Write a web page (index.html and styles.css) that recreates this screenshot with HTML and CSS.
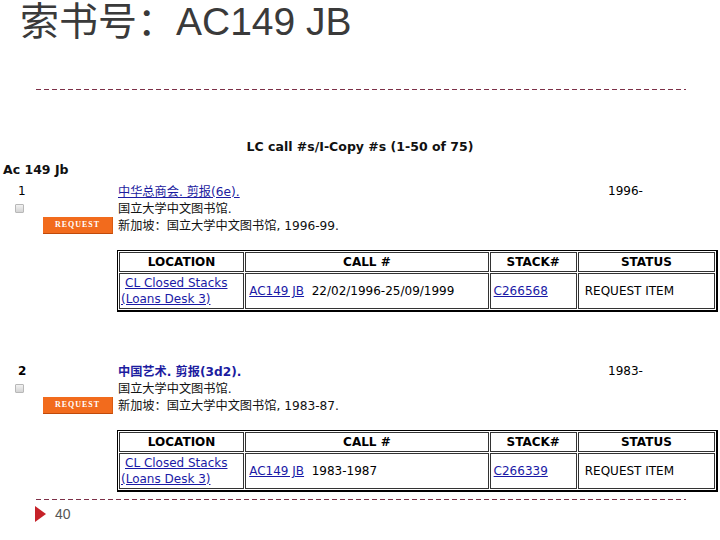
FILE: index.html
```html
<!DOCTYPE html>
<html>
<head>
<meta charset="utf-8">
<link rel="stylesheet" href="styles.css">
</head>
<body>
<div class="slide">
  <h1 class="title">索书号：AC149 JB</h1>
  <div class="rule rule-top"></div>

  <div class="caption">LC call #s/I-Copy #s (1-50 of 75)</div>
  <div class="heading">Ac 149 Jb</div>

  <div class="record">
    <div class="num">1</div>
    <div class="check"><span class="box"></span></div>
    <div class="btn-cell"><span class="req-btn">REQUEST</span></div>
    <div class="line l1"><a class="title-link u" href="#">中华总商会. 剪报(6e).</a></div>
    <div class="line l2">国立大学中文图书馆.</div>
    <div class="line l3">新加坡：国立大学中文图书馆, 1996-99.</div>
    <div class="year">1996-</div>
  </div>

  <table class="holdings">
    <tr class="head">
      <th class="c-loc">LOCATION</th>
      <th class="c-call">CALL #</th>
      <th class="c-stack">STACK#</th>
      <th class="c-status">STATUS</th>
    </tr>
    <tr class="data">
      <td class="loc"><a href="#"><span class="indent">CL Closed Stacks</span><br>(Loans Desk 3)</a></td>
      <td><a href="#">AC149 JB</a>&nbsp;&nbsp;22/02/1996-25/09/1999</td>
      <td><a href="#">C266568</a></td>
      <td class="status">REQUEST ITEM</td>
    </tr>
  </table>

  <div class="record record2">
    <div class="num bold">2</div>
    <div class="check"><span class="box"></span></div>
    <div class="btn-cell"><span class="req-btn">REQUEST</span></div>
    <div class="line l1"><a class="title-link b" href="#">中国艺术. 剪报(3d2).</a></div>
    <div class="line l2">国立大学中文图书馆.</div>
    <div class="line l3">新加坡：国立大学中文图书馆, 1983-87.</div>
    <div class="year">1983-</div>
  </div>

  <table class="holdings holdings2">
    <tr class="head">
      <th class="c-loc">LOCATION</th>
      <th class="c-call">CALL #</th>
      <th class="c-stack">STACK#</th>
      <th class="c-status">STATUS</th>
    </tr>
    <tr class="data">
      <td class="loc"><a href="#"><span class="indent">CL Closed Stacks</span><br>(Loans Desk 3)</a></td>
      <td><a href="#">AC149 JB</a>&nbsp;&nbsp;1983-1987</td>
      <td><a href="#">C266339</a></td>
      <td class="status">REQUEST ITEM</td>
    </tr>
  </table>

  <div class="rule rule-bottom"></div>
  <div class="footer">
    <span class="tri"></span>
    <span class="page">40</span>
  </div>
</div>
</body>
</html>
```

FILE: styles.css
```css
html, body {
  margin: 0;
  padding: 0;
  background: #fff;
}
.slide {
  width: 720px;
  height: 540px;
  overflow: hidden;
  font-family: "DejaVu Sans", "Noto Sans CJK SC", sans-serif;
  color: #000;
}
.title {
  margin: 0;
  padding-left: 20px;
  height: 44px;
  font-size: 39px;
  line-height: 44px;
  font-weight: normal;
  color: #3a3a3a;
  font-family: "Liberation Sans", "Noto Sans CJK SC", sans-serif;
}
.rule {
  margin-left: 36px;
  width: 650px;
  height: 1px;
  background: repeating-linear-gradient(to right, #7d3048 0 5px, transparent 5px 8px);
}
.rule-top {
  margin-top: 45px;
}
.caption {
  margin-top: 48px;
  text-align: center;
  font-weight: bold;
  font-size: 12.5px;
  line-height: 18px;
  color: #111;
}
.heading {
  margin-top: 5px;
  padding-left: 3px;
  font-weight: bold;
  font-size: 12.5px;
  line-height: 18px;
  color: #111;
}
.record {
  margin-top: 4px;
  display: grid;
  grid-template-columns: 15px 28px 75px 490px 1fr;
  grid-template-rows: 17px 17px 17px;
  font-size: 12px;
  line-height: 17px;
}
.record2 {
  margin-top: 51px;
}
.num {
  grid-column: 2;
  grid-row: 1;
  padding-left: 3px;
  font-size: 12px;
}
.num.bold {
  font-weight: bold;
}
.check {
  grid-column: 2;
  grid-row: 2;
  display: flex;
  align-items: center;
}
.box {
  display: block;
  width: 7px;
  height: 7px;
  border: 1px solid #b8b8b8;
  background: linear-gradient(#f2f2f2, #d4d4d4);
  border-radius: 1px;
}
.btn-cell {
  grid-column: 2 / 4;
  grid-row: 3;
  padding-left: 28px;
  display: flex;
  align-items: center;
}
.req-btn {
  display: block;
  width: 69px;
  height: 16px;
  background: #f26b1d;
  border-bottom: 1px solid #c04a0a;
  border-right: 1px solid #d85a12;
  color: #fff;
  font-family: "Liberation Serif", serif;
  font-weight: bold;
  font-size: 8px;
  letter-spacing: 1px;
  line-height: 16px;
  text-align: center;
}
.line {
  grid-column: 4;
  font-family: "DejaVu Sans", "Noto Sans CJK SC", sans-serif;
  font-size: 12.2px;
  line-height: 15px;
  height: 15px;
  padding-top: 2px;
  color: #111;
  white-space: nowrap;
}
.l1 { grid-row: 1; }
.l2 { grid-row: 2; }
.l3 { grid-row: 3; }
.title-link {
  color: #1c1ca0;
}
.title-link.u {
  text-decoration: underline;
}
.title-link.b {
  text-decoration: none;
  font-weight: bold;
}
.year {
  grid-column: 5;
  grid-row: 1;
  font-size: 12px;
}
a {
  color: #1a1aa6;
  text-decoration: underline;
}
.holdings {
  margin-top: 16px;
  margin-left: 117px;
  width: 601px;
  border-collapse: separate;
  border-spacing: 1px;
  border: 1px solid #000;
  border-right-width: 2px;
  border-bottom-width: 2px;
  font-size: 12px;
  table-layout: fixed;
}
.holdings th, .holdings td {
  border: 1px solid #333;
  padding: 0 3px;
  white-space: nowrap;
}
.holdings th {
  height: 18px;
  font-weight: bold;
  text-align: center;
  line-height: 16px;
}
.holdings td {
  height: 34px;
  line-height: 16px;
  text-align: left;
}
.c-loc { width: 117px; }
.c-call { width: 235px; }
.c-stack { width: 79px; }
.c-status { width: 129px; }
.holdings td.loc {
  padding: 0 1px;
}
.loc .indent {
  padding-left: 4px;
}
.holdings td.status {
  padding-left: 6px;
}
.rule-bottom {
  margin-top: 7px;
}
.footer {
  margin-top: 6px;
  padding-left: 35px;
  display: flex;
  align-items: center;
  height: 16px;
}
.tri {
  display: block;
  width: 0;
  height: 0;
  border-top: 8px solid transparent;
  border-bottom: 8px solid transparent;
  border-left: 11px solid #c62229;
}
.page {
  margin-left: 9px;
  font-family: "Liberation Sans", sans-serif;
  font-size: 14px;
  color: #555;
}
```
